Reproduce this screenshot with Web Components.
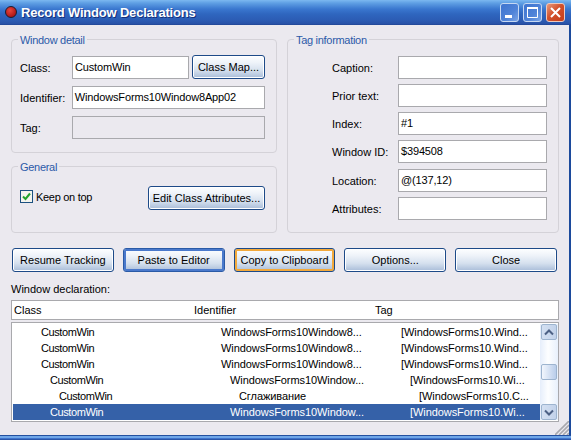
<!DOCTYPE html>
<html>
<head>
<meta charset="utf-8">
<title>Record Window Declarations</title>
<style>
html, body { margin: 0; height: 100%; background: #ebe9ef; overflow: hidden; }
body { font: 11px "Liberation Sans", Arial, sans-serif; color: #000; }
</style>
</head>
<body>
<xp-window caption="Record Window Declarations">
  <div style="display:grid;grid-template-columns:266px 272px;column-gap:10px;">
    <div style="display:flex;flex-direction:column;gap:13px;">
      <xp-group legend="Window detail" style="height:114px;">
        <div style="display:flex;flex-direction:column;gap:7px;">
          <div style="display:flex;align-items:flex-end;">
            <xp-field label="Class:" value="CustomWin" label-width="52" field-width="117"></xp-field>
            <xp-button style="width:73px;height:24px;margin-left:3px;">Class Map...</xp-button>
          </div>
          <xp-field label="Identifier:" value="WindowsForms10Window8App02" label-width="52" field-width="194"></xp-field>
          <xp-field label="Tag:" disabled label-width="52" field-width="194"></xp-field>
        </div>
      </xp-group>
      <xp-group legend="General" style="height:67px;">
        <div style="display:flex;align-items:center;justify-content:space-between;padding-top:4px;">
          <xp-check>Keep on top</xp-check>
          <xp-button style="width:117px;height:24px;">Edit Class Attributes...</xp-button>
        </div>
      </xp-group>
    </div>
    <xp-group legend="Tag information">
      <div style="display:flex;flex-direction:column;gap:5px;padding:1px 0 0 36px;">
        <xp-field label="Caption:" label-width="66" field-width="149"></xp-field>
        <xp-field label="Prior text:" label-width="66" field-width="149"></xp-field>
        <xp-field label="Index:" value="#1" label-width="66" field-width="149"></xp-field>
        <xp-field label="Window ID:" value="$394508" label-width="66" field-width="149"></xp-field>
        <xp-field label="Location:" value="@(137,12)" label-width="66" field-width="149" style="margin-top:1px;"></xp-field>
        <xp-field label="Attributes:" label-width="66" field-width="149"></xp-field>
      </div>
    </xp-group>
  </div>
  <div style="display:flex;gap:9px;margin:15px 0 0 1px;">
    <xp-button style="width:102px;height:24px;">Resume Tracking</xp-button>
    <xp-button kind="default" style="width:102px;height:24px;">Paste to Editor</xp-button>
    <xp-button kind="focus" style="width:102px;height:24px;">Copy to Clipboard</xp-button>
    <xp-button style="width:102px;height:24px;">Options...</xp-button>
    <xp-button style="width:102px;height:24px;">Close</xp-button>
  </div>
  <div style="margin-top:11px;height:13px;line-height:13px;">Window declaration:</div>
  <xp-list style="margin-top:4px;"></xp-list>
</xp-window>

<script>
class XpWindow extends HTMLElement {
  constructor() {
    super();
    this.attachShadow({ mode: "open" });
    this.shadowRoot.innerHTML = `
<style>
  :host { display: flex; flex-direction: column; width: 571px; height: 440px; position: relative; }
  .title {
    height: 25px; display: flex; align-items: center; box-sizing: border-box; padding: 0 5px 1px 5px;
    background: linear-gradient(#7cb8f0 0, #5f9fe4 3px, #3a77cf 9px, #2f66bf 14px, #2c5cb4 20px, #2851a6 24px, #1f4290 25px);
  }
  .dot {
    width: 10px; height: 10px; border-radius: 50%; margin-right: 4px;
    background: radial-gradient(circle at 40% 35%, #e8453c, #b01818 70%);
    border: 1px solid #1c1c30;
  }
  .caption {
    flex: 1; color: #fff; font: bold 13px "Liberation Sans", Arial, sans-serif;
    letter-spacing: -.2px; text-shadow: 1px 1px 0 #14307c;
  }
  .tbtn {
    width: 19px; height: 19px; margin-left: 4px; border: 1px solid #c6d8f2; border-radius: 3px; box-sizing: border-box;
    background: linear-gradient(135deg, #3e74cf, #4f83d8 60%, #7aa4e6);
    display: block;
  }
  .tbtn.close { background: linear-gradient(135deg, #e89a7c, #d2512c 45%, #c43d18); border-color: #eec9bd; margin-right: 1px; }
  .body {
    flex: 1; background: #ebe9ef; padding: 14px 12px 0 11px; border-right: 2px solid #1c4a9c; min-height: 0;
  }
  .foot { height: 5px; background: linear-gradient(#24509f 0 1px, #6fa6e8 1px 3px, #3f74cc 3px 4px, #2a55a8 4px 5px); }
  .grip { position: absolute; right: 2px; bottom: 5px; }
</style>
<div class="title">
  <span class="dot"></span>
  <span class="caption"></span>
  <svg class="tbtn" viewBox="0 0 17 17"><rect x="4" y="11" width="7" height="3" fill="#fff"/></svg>
  <svg class="tbtn" viewBox="0 0 17 17"><path d="M3.5 4.5h10v9h-10z M3 3.5h11" fill="none" stroke="#fff" stroke-width="1"/><rect x="3" y="3" width="11" height="2" fill="#fff"/></svg>
  <svg class="tbtn close" viewBox="0 0 17 17"><path d="M4 4l9 9M13 4l-9 9" stroke="#fff" stroke-width="2"/></svg>
</div>
<div class="body"><slot></slot></div>
<div class="foot"></div>
<svg class="grip" width="14" height="14" viewBox="0 0 14 14"><path d="M14 0L0 14M14 4L4 14M14 8L8 14M14 12l-2 2" stroke="#a8a8ae" stroke-width="1.6"/></svg>`;
  }
  connectedCallback() {
    this.shadowRoot.querySelector(".caption").textContent = this.getAttribute("caption");
  }
}

class XpGroup extends HTMLElement {
  constructor() {
    super();
    this.attachShadow({ mode: "open" });
    this.shadowRoot.innerHTML = `
<style>
  :host {
    display: block; position: relative; box-sizing: border-box; border: 1px solid #d4d2d8; border-radius: 4px;
    padding: 15px 11px 0 8px;
  }
  .legend {
    position: absolute; top: -6px; left: 6px; padding: 0 2px; background: #ebe9ef; color: #2b5aa8;
    line-height: 13px; letter-spacing: -.3px;
  }
</style>
<div class="legend"></div>
<slot></slot>`;
  }
  connectedCallback() {
    this.shadowRoot.querySelector(".legend").textContent = this.getAttribute("legend");
  }
}

class XpField extends HTMLElement {
  constructor() {
    super();
    this.attachShadow({ mode: "open" });
    this.shadowRoot.innerHTML = `
<style>
  :host { display: flex; align-items: center; height: 23px; }
  .box {
    box-sizing: border-box; height: 23px; border: 1px solid #a9a9ad; background: #fff; line-height: 21px;
    padding-left: 2px; white-space: nowrap; overflow: hidden; letter-spacing: -.15px;
  }
  .box.off { background: #ebe9ef; }
</style>
<label></label>
<div class="box"></div>`;
  }
  connectedCallback() {
    const label = this.shadowRoot.querySelector("label");
    const box = this.shadowRoot.querySelector(".box");
    label.textContent = this.getAttribute("label");
    label.style.width = this.getAttribute("label-width") + "px";
    box.style.width = this.getAttribute("field-width") + "px";
    box.textContent = this.getAttribute("value") || "";
    if (this.hasAttribute("disabled")) box.classList.add("off");
  }
}

class XpButton extends HTMLElement {
  constructor() {
    super();
    this.attachShadow({ mode: "open" });
    this.shadowRoot.innerHTML = `
<style>
  :host {
    display: flex; box-sizing: border-box; border: 1px solid #1d4a88; border-radius: 3px;
    background: linear-gradient(#fdfeff 0, #eef3f9 30%, #d5e0ee 65%, #a8bcd8 100%);
    box-shadow: inset 0 0 0 1px #fff;
    align-items: center; justify-content: center; white-space: nowrap; line-height: 13px;
  }
  :host([kind="default"]) { border-color: #2a5aa6; box-shadow: inset 0 0 0 2px #4a79cc; }
  :host([kind="focus"]) { box-shadow: inset 0 0 0 2px #f2a93c; }
</style>
<slot></slot>`;
  }
}

class XpCheck extends HTMLElement {
  constructor() {
    super();
    this.attachShadow({ mode: "open" });
    this.shadowRoot.innerHTML = `
<style>
  :host { display: flex; align-items: center; gap: 3px; margin-top: -3px; letter-spacing: -.3px; }
  svg { display: block; }
</style>
<svg width="13" height="13" viewBox="0 0 13 13">
  <rect x=".5" y=".5" width="12" height="12" fill="#f4f4ee" stroke="#1c5180"/>
  <path d="M3 6.5l2.5 2.5 4.5-5.5" fill="none" stroke="#22a32c" stroke-width="2"/>
</svg>
<span><slot></slot></span>`;
  }
}

const ROWS = [
  [0, "CustomWin", "WindowsForms10Window8...", "[WindowsForms10.Wind..."],
  [0, "CustomWin", "WindowsForms10Window8...", "[WindowsForms10.Wind..."],
  [0, "CustomWin", "WindowsForms10Window8...", "[WindowsForms10.Wind..."],
  [1, "CustomWin", "WindowsForms10Window...", "[WindowsForms10.Wi..."],
  [2, "CustomWin", "Сглаживание", "[WindowsForms10.C..."],
  [1, "CustomWin", "WindowsForms10Window...", "[WindowsForms10.Wi..."]
];

class XpList extends HTMLElement {
  constructor() {
    super();
    this.attachShadow({ mode: "open" });
    this.shadowRoot.innerHTML = `
<style>
  :host { display: block; width: 548px; }
  .head {
    display: grid; grid-template-columns: 180px 181px 1fr; box-sizing: border-box; height: 20px; line-height: 18px;
    border: 1px solid #a9a9ad; background: #fff; padding-left: 2px; margin-bottom: 2px;
  }
  .main { display: flex; box-sizing: border-box; height: 100px; border: 1px solid #a9a9ad; background: #fff; padding: 1px 0 1px 1px; }
  .rows { flex: 1; min-width: 0; }
  .row { display: grid; grid-template-columns: 180px 180px 1fr; height: 16px; line-height: 16px; white-space: nowrap; letter-spacing: -.07px; }
  .row.sel { background: #3561a8; color: #fff; }
  .row span { padding-left: calc(28px + var(--indent) * 9px); }
  .row span:first-child { letter-spacing: -.4px; }
  .bar {
    flex: none; width: 18px; display: flex; flex-direction: column; box-sizing: border-box; padding: 0 1px;
    background: linear-gradient(90deg, #e6eefb, #fdfeff 45%, #e8f0fc);
  }
  .arrow {
    height: 16px; box-sizing: border-box; border: 1px solid #9db4cf; border-radius: 2px;
    background: linear-gradient(90deg, #d4e0f2, #c2d2ea); display: flex; align-items: center; justify-content: center;
  }
  .thumb {
    height: 16px; margin-top: 24px; box-sizing: border-box; border: 1px solid #9db4cf; border-radius: 2px;
    background: linear-gradient(90deg, #f2f6fd, #b9cdea);
  }
  .gap { flex: 1; }
</style>
<div class="head"><span>Class</span><span>Identifier</span><span>Tag</span></div>
<div class="main">
  <div class="rows"></div>
  <div class="bar">
    <div class="arrow"><svg width="10" height="7" viewBox="0 0 10 7"><path d="M1 5.5l4-4 4 4" fill="none" stroke="#4d6185" stroke-width="2"/></svg></div>
    <div class="thumb"></div>
    <div class="gap"></div>
    <div class="arrow"><svg width="10" height="7" viewBox="0 0 10 7"><path d="M1 1.5l4 4 4-4" fill="none" stroke="#4d6185" stroke-width="2"/></svg></div>
  </div>
</div>`;
  }
  connectedCallback() {
    const rows = this.shadowRoot.querySelector(".rows");
    ROWS.forEach((r, i) => {
      const row = document.createElement("div");
      row.className = i == ROWS.length - 1 ? "row sel" : "row";
      row.style.setProperty("--indent", r[0]);
      for (let c = 1; c < 4; c++) {
        const s = document.createElement("span");
        s.textContent = r[c];
        row.appendChild(s);
      }
      rows.appendChild(row);
    });
  }
}

customElements.define("xp-window", XpWindow);
customElements.define("xp-group", XpGroup);
customElements.define("xp-field", XpField);
customElements.define("xp-button", XpButton);
customElements.define("xp-check", XpCheck);
customElements.define("xp-list", XpList);
</script>
</body>
</html>
